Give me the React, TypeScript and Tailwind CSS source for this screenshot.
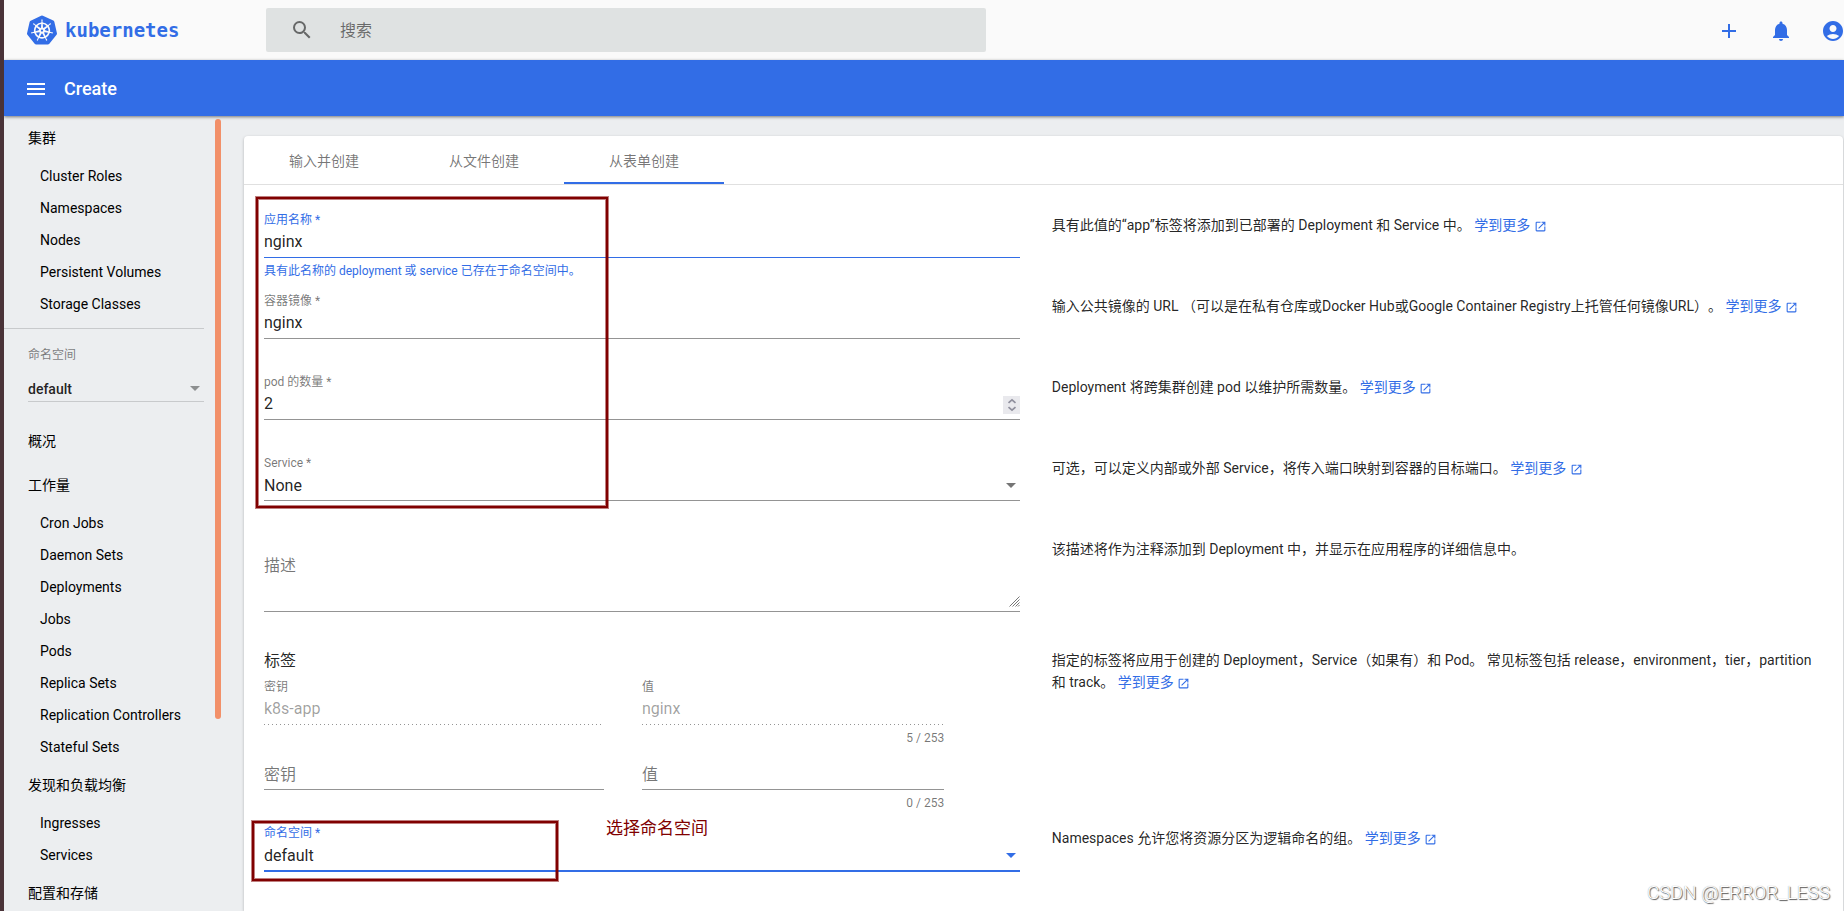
import type { ReactNode } from 'react'
import { MdAccountCircle, MdAdd, MdMenu, MdNotifications, MdOpenInNew, MdSearch } from 'react-icons/md'
import { SiKubernetes } from 'react-icons/si'

const clusterItems = ['Cluster Roles', 'Namespaces', 'Nodes', 'Persistent Volumes', 'Storage Classes']
const workloadItems = [
  'Cron Jobs',
  'Daemon Sets',
  'Deployments',
  'Jobs',
  'Pods',
  'Replica Sets',
  'Replication Controllers',
  'Stateful Sets',
]
const discoveryItems = ['Ingresses', 'Services']
const tabs = ['输入并创建', '从文件创建', '从表单创建']

function NavHeading({ children }: { children: ReactNode }) {
  return (
    <a href="#" className="block h-11 pl-6 leading-11 text-black">
      {children}
    </a>
  )
}

function NavList({ items }: { items: string[] }) {
  return (
    <ul>
      {items.map((item) => (
        <li key={item}>
          <a href="#" className="block h-8 pl-9 leading-8 text-black">
            {item}
          </a>
        </li>
      ))}
    </ul>
  )
}

function Caret({ className }: { className: string }) {
  return (
    <svg viewBox="0 0 10 5" className={`pointer-events-none h-[5px] w-[10px] shrink-0 ${className}`}>
      <path d="M0 0h10L5 5z" fill="currentColor" />
    </svg>
  )
}

function Sidebar() {
  return (
    <aside className="flex w-60 shrink-0 gap-[11px] text-sm">
      <nav className="w-50">
        <NavHeading>集群</NavHeading>
        <NavList items={clusterItems} />
        <div className="mt-2 h-[91px] border-t border-black/15 pt-[18px] pl-6">
          <label htmlFor="nav-namespace" className="block text-xs leading-4 text-black/50">
            命名空间
          </label>
          <div className="mt-[11px] flex h-7 items-center border-b border-black/15 pt-0.5 pr-1">
            <select
              id="nav-namespace"
              className="flex-1 appearance-none bg-transparent font-medium text-black/87 outline-none"
            >
              <option>default</option>
            </select>
            <Caret className="text-black/40" />
          </div>
        </div>
        <NavHeading>概况</NavHeading>
        <NavHeading>工作量</NavHeading>
        <NavList items={workloadItems} />
        <NavHeading>发现和负载均衡</NavHeading>
        <NavList items={discoveryItems} />
        <NavHeading>配置和存储</NavHeading>
      </nav>
      <div className="mt-[3px] h-150 w-1.5 rounded-full bg-[#f29069]" />
    </aside>
  )
}

function LearnMore() {
  return (
    <a href="#" className="whitespace-nowrap text-[#326de6]">
      学到更多 <MdOpenInNew className="inline size-[13px] align-[-3px]" />
    </a>
  )
}

type RowProps = {
  help: string
  link?: boolean
  className: string
  children: ReactNode
}

function Row({ help, link = true, className, children }: RowProps) {
  return (
    <div className={`grid grid-cols-[98fr_100fr] gap-8 ${className}`}>
      <div>{children}</div>
      <p className="pt-0.5 text-sm leading-[22px]">
        {help} {link && <LearnMore />}
      </p>
    </div>
  )
}

type FieldProps = {
  id: string
  label?: string
  hint?: ReactNode
  labelClass?: string
  lineClass?: string
  children: ReactNode
}

function Field({ id, label, hint, labelClass = 'text-black/54', lineClass = 'border-b border-black/42', children }: FieldProps) {
  return (
    <div>
      <label htmlFor={id} className={`block h-4 text-xs leading-4 ${labelClass}`}>
        {label}
      </label>
      <div className={`flex items-center ${lineClass}`}>{children}</div>
      {hint && <div className="mt-[7px] text-xs leading-3">{hint}</div>}
    </div>
  )
}

const control = 'h-[29px] min-w-0 flex-1 appearance-none bg-transparent text-base outline-none'

function Spinner() {
  return (
    <button type="button" aria-label="调整数量" className="h-[18px] w-[17px] bg-[#e9e9ed]">
      <svg viewBox="0 0 17 18" className="h-[18px] w-[17px]" fill="none" stroke="#8f8f9d" strokeWidth="1.7">
        <path d="M5.5 6.8l3.5-3 3.5 3M5.500 11.2l3.500 3 3.5-3" />
      </svg>
    </button>
  )
}

function CreateForm() {
  return (
    <form className="px-5 pt-[27px]">
      <Row className="min-h-[81px]" help="具有此值的“app”标签将添加到已部署的 Deployment 和 Service 中。">
        <Field
          id="app-name"
          label="应用名称 *"
          labelClass="text-[#326de6]"
          lineClass="border-b border-[#326de6]"
          hint={<span className="text-[#326de6]">具有此名称的 deployment 或 service 已存在于命名空间中。</span>}
        >
          <input id="app-name" defaultValue="nginx" className={`${control} pb-0.5`} />
        </Field>
      </Row>
      <Row
        className="min-h-[81px]"
        help="输入公共镜像的 URL （可以是在私有仓库或Docker Hub或Google Container Registry上托管任何镜像URL）。"
      >
        <Field id="image" label="容器镜像 *">
          <input id="image" defaultValue="nginx" className={`${control} pb-0.5`} />
        </Field>
      </Row>
      <Row className="min-h-[81px]" help="Deployment 将跨集群创建 pod 以维护所需数量。">
        <Field id="replicas" label="pod 的数量 *">
          <input id="replicas" inputMode="numeric" defaultValue="2" className={`${control} pb-0.5`} />
          <Spinner />
        </Field>
      </Row>
      <Row className="min-h-[81px]" help="可选，可以定义内部或外部 Service，将传入端口映射到容器的目标端口。">
        <Field id="service" label="Service *">
          <select id="service" className={control}>
            <option>None</option>
          </select>
          <Caret className="mr-1 text-black/54" />
        </Field>
      </Row>
      <Row className="min-h-[111px]" link={false} help="该描述将作为注释添加到 Deployment 中，并显示在应用程序的详细信息中。">
        <div className="flex items-end border-b border-black/42 pt-[18px]">
          <textarea
            aria-label="描述"
            placeholder="描述"
            className="h-[57px] flex-1 resize-none bg-transparent text-base leading-6 outline-none placeholder:text-black/54"
          />
          <svg viewBox="0 0 11 11" className="mb-1 size-[11px]" stroke="#777" strokeWidth="1">
            <path d="M.5 10.5l10-10M3.5 10.5l7-7M6.5 10.5l4-4M9 10.5L10.5 9" />
          </svg>
        </div>
      </Row>
      <Row
        className="min-h-[178px]"
        help="指定的标签将应用于创建的 Deployment，Service（如果有）和 Pod。 常见标签包括 release，environment，tier，partition 和 track。"
      >
        <h3 className="mb-1.5 pt-0.5 text-base">标签</h3>
        <div className="grid grid-cols-[45%_40%] gap-x-[5%]">
          <Field id="key-0" label="密钥" lineClass="border-b border-transparent">
            <DottedInput id="key-0" value="k8s-app" />
          </Field>
          <Field id="value-0" label="值" lineClass="border-b border-transparent" hint={<Counter>5 / 253</Counter>}>
            <DottedInput id="value-0" value="nginx" />
          </Field>
          <Field id="key-1">
            <input id="key-1" aria-label="密钥" placeholder="密钥" className={`${control} placeholder:text-black/54`} />
          </Field>
          <Field id="value-1" hint={<Counter>0 / 253</Counter>}>
            <input id="value-1" aria-label="值" placeholder="值" className={`${control} placeholder:text-black/54`} />
          </Field>
        </div>
      </Row>
      <Row className="min-h-[120px]" help="Namespaces 允许您将资源分区为逻辑命名的组。">
        <Field id="namespace" label="命名空间 *" labelClass="text-[#326de6]" lineClass="border-b-2 border-[#326de6]">
          <select id="namespace" className={control}>
            <option>default</option>
          </select>
          <Caret className="mr-1 text-[#326de6]" />
        </Field>
      </Row>
    </form>
  )
}

function Counter({ children }: { children: ReactNode }) {
  return <span className="block text-right text-black/54">{children}</span>
}

// Disabled fields get a one pixel dot every four pixels instead of a solid line
function DottedInput({ id, value }: { id: string; value: string }) {
  return (
    <div className="-mb-px flex flex-1 bg-[linear-gradient(to_right,rgba(0,0,0,0.42)_0_25%,transparent_0)] bg-[size:4px_1px] bg-bottom-left bg-repeat-x pb-px">
      <input id={id} disabled defaultValue={value} className={`${control} pb-0.5 text-black/38`} />
    </div>
  )
}

function Marks() {
  const box = 'absolute border-2 border-[#800000] shadow-[0_0_0_1px_#80000080,inset_0_0_0_1px_#80000080]'
  return (
    <div className="pointer-events-none">
      <div className={`${box} top-[61px] left-3 h-[311px] w-[352px]`} />
      <div className={`${box} top-[685px] left-2 h-[60px] w-[306px]`} />
      <span className="absolute top-[680px] left-[362px] text-[17px] leading-6 text-[#800000]">选择命名空间</span>
    </div>
  )
}

export default function App() {
  return (
    <div className="flex h-screen flex-col overflow-hidden border-l-4 border-[#4a3338] bg-[#eceef0] font-['Roboto','Noto_Sans_CJK_SC',sans-serif] text-black/87 [text-spacing-trim:space-all]">
      <header className="flex h-15 shrink-0 items-center bg-[#fafafa] pl-[23px]">
        <a href="#" className="flex w-[239px] items-center gap-2 text-[#326de6]">
          <SiKubernetes className="size-[30px]" />
          <span className="font-['DejaVu_Sans_Mono',monospace] text-[19px] font-bold">kubernetes</span>
        </a>
        <label className="flex h-11 w-[39.6%] items-center gap-[26px] rounded-xs bg-[#dfe2e2] pl-6">
          <MdSearch className="size-6 shrink-0 text-black/54" />
          <input
            type="search"
            aria-label="搜索"
            placeholder="搜索"
            className="flex-1 bg-transparent pt-0.5 text-base outline-none placeholder:text-black/54"
          />
        </label>
        <div className="-mr-px ml-auto flex gap-7 pt-0.5 text-[#326de6]">
          <button aria-label="新建">
            <MdAdd className="size-6" />
          </button>
          <button aria-label="通知">
            <MdNotifications className="size-6" />
          </button>
          <button aria-label="用户">
            <MdAccountCircle className="size-6" />
          </button>
        </div>
      </header>

      <div className="z-10 flex h-14 shrink-0 items-center gap-4 bg-[#326de6] pt-0.5 pl-5 text-white shadow-[0_1px_3px_rgba(0,0,0,0.5)]">
        <button aria-label="菜单">
          <MdMenu className="size-6" />
        </button>
        <h1 className="text-lg font-medium">Create</h1>
      </div>

      <div className="flex min-h-0 flex-1">
        <Sidebar />
        <main className="relative mt-5 mr-px flex-1 rounded-t bg-white shadow-[0_1px_3px_rgba(0,0,0,0.25)]">
          <div role="tablist" className="flex h-[49px] border-b border-black/12 text-sm">
            {tabs.map((tab, i) => (
              <button
                key={tab}
                role="tab"
                aria-selected={i === 2}
                className="h-12 w-40 border-b-2 border-transparent pt-1 text-black/54 aria-selected:border-[#326de6]"
              >
                {tab}
              </button>
            ))}
          </div>
          <CreateForm />
          <Marks />
        </main>
      </div>

      <span className="absolute right-3.5 bottom-1.5 text-[19px] leading-6 font-light text-white [text-shadow:1px_1px_1px_#555,0_0_1px_#999]">
        CSDN @ERROR_LESS
      </span>
    </div>
  )
}
